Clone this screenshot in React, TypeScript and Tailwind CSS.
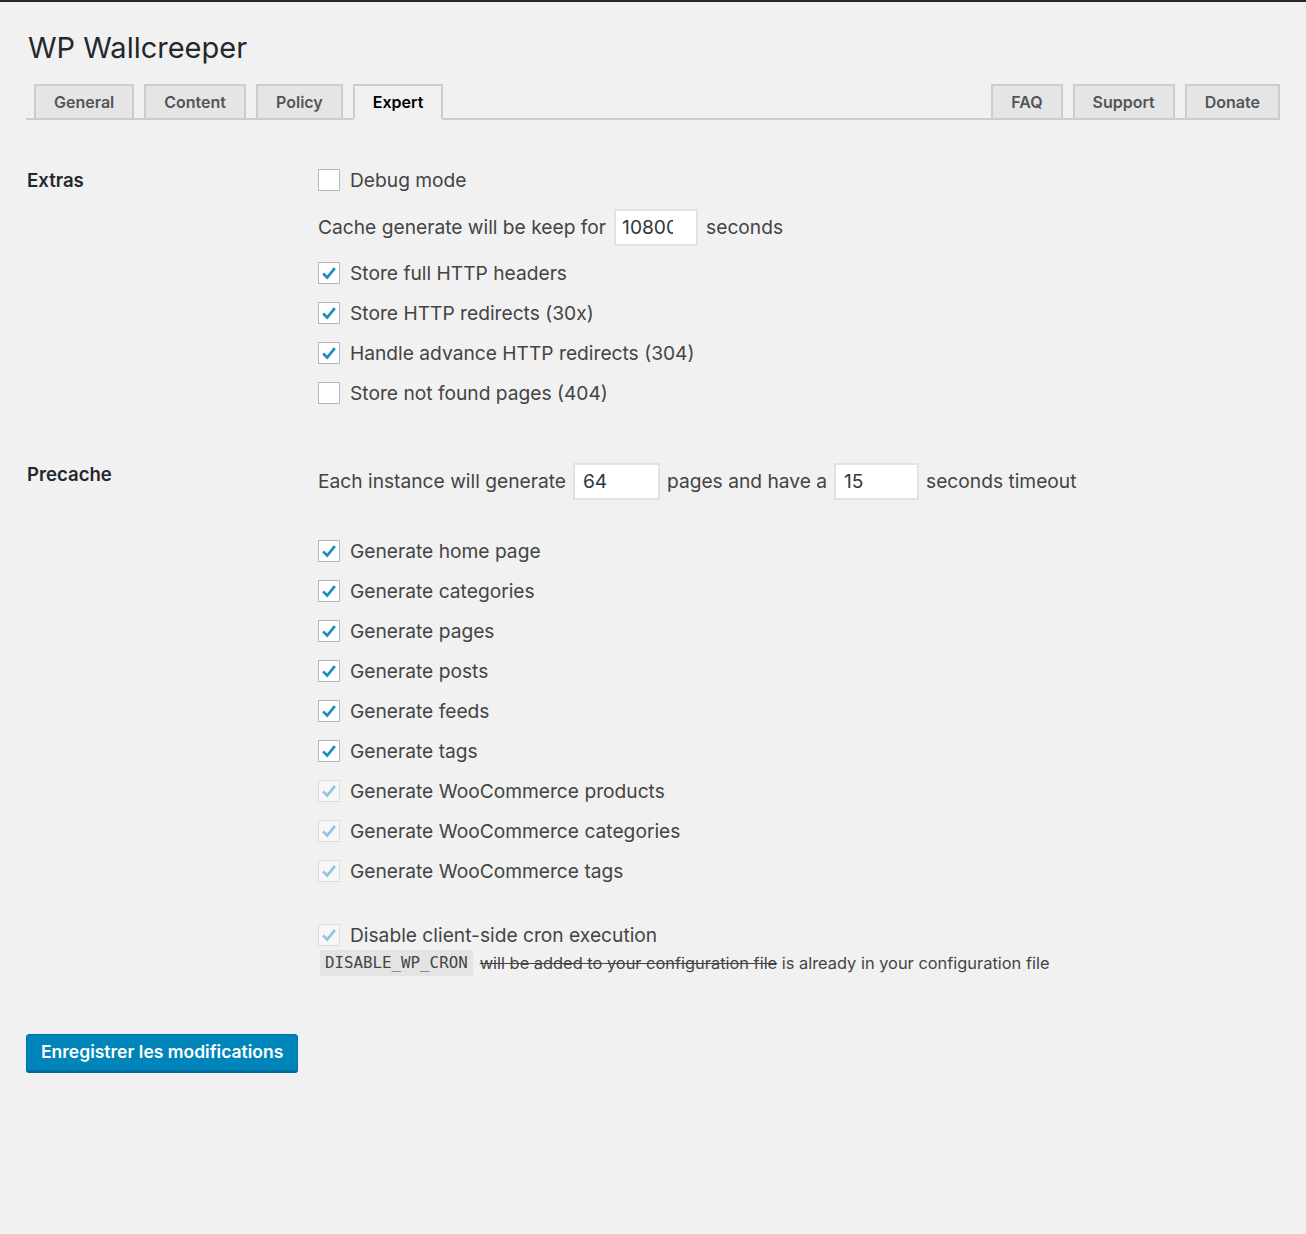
import React from "react";

const font = { fontFamily: "Inter, 'Noto Sans', sans-serif" };

function Check({ checked, disabled }: { checked?: boolean; disabled?: boolean }) {
  return (
    <span
      className={
        "flex h-[22px] w-[22px] shrink-0 items-center justify-center border " +
        (disabled ? "border-[#dcdcdc] bg-[#f7f7f7]" : "border-[#b4b9be] bg-white")
      }
    >
      {checked && (
        <svg width="18" height="18" viewBox="0 0 20 20">
          <path
            d="M3.5 10.5 L8 15 L16.5 4.5"
            fill="none"
            stroke={disabled ? "#8fc6dd" : "#1e8cbe"}
            strokeWidth="3"
          />
        </svg>
      )}
    </span>
  );
}

function CheckRow({ label, checked, disabled }: { label: string; checked?: boolean; disabled?: boolean }) {
  return (
    <div className="flex h-[40px] items-center gap-[10px]">
      <Check checked={checked} disabled={disabled} />
      <span>{label}</span>
    </div>
  );
}

function Input({ value, w, inner }: { value: string; w: string; inner?: string }) {
  return (
    <span
      className={
        "flex h-[37px] items-center whitespace-nowrap border-2 border-[#e2e2e2] bg-white px-[6px] text-[#32373c] " +
        w
      }
    >
      <span className={"block overflow-hidden " + (inner || "")}>{value}</span>
    </span>
  );
}

function Tab({ label, active }: { label: string; active?: boolean }) {
  return (
    <div
      className={
        "flex h-[36px] items-center border-2 px-[18px] text-[16px] font-semibold " +
        (active
          ? "border-[#ccc] border-b-[#f1f1f1] bg-[#f1f1f1] text-black"
          : "border-[#ccc] bg-[#e5e5e5] text-[#555]")
      }
    >
      {label}
    </div>
  );
}

export default function App() {
  return (
    <div className="min-h-[1234px] bg-[#f1f1f1] text-[#444]" style={font}>
      <div className="h-[2px] bg-[#23282d]" />
      <div className="pl-[26px] pr-[26px]">
        <h1 className="pl-[2px] pt-[28px] text-[29px] font-normal leading-[36px] text-[#23282d]">WP Wallcreeper</h1>
        <div className="mt-[18px] flex items-end border-b-2 border-[#ccc] pl-[8px] pr-[0px]">
          <div className="-mb-[2px] flex gap-[10px]">
            <Tab label="General" />
            <Tab label="Content" />
            <Tab label="Policy" />
            <Tab label="Expert" active />
          </div>
          <div className="flex-1" />
          <div className="-mb-[2px] flex gap-[10px]">
            <Tab label="FAQ" />
            <Tab label="Support" />
            <Tab label="Donate" />
          </div>
        </div>

        <div className="text-[19.2px]">
          <div className="mt-[40px] flex">
            <div className="w-[292px] pl-[1px] pt-[9px] text-[18.6px] font-semibold leading-[22px] text-[#23282d]">Extras</div>
            <div className="flex flex-col">
              <CheckRow label="Debug mode" />
              <div className="mb-[6px] mt-[7px] flex h-[40px] items-center gap-[8px]">
                <span>Cache generate will be keep for</span>
                <Input value="10800" w="w-[84px]" inner="w-[51px]" />
                <span>seconds</span>
              </div>
              <CheckRow label="Store full HTTP headers" checked />
              <CheckRow label="Store HTTP redirects (30x)" checked />
              <CheckRow label="Handle advance HTTP redirects (304)" checked />
              <CheckRow label="Store not found pages (404)" />
            </div>
          </div>

          <div className="mt-[49px] flex">
            <div className="w-[292px] pl-[1px] pt-[1px] text-[18.6px] font-semibold leading-[22px] text-[#23282d]">Precache</div>
            <div className="flex flex-col">
              <div className="flex h-[38px] items-center gap-[7px]">
                <span>Each instance will generate</span>
                <Input value="64" w="w-[87px]" inner="pl-[2px]" />
                <span>pages and have a</span>
                <Input value="15" w="w-[85px]" inner="pl-[2px]" />
                <span>seconds timeout</span>
              </div>
              <div className="h-[31px]" />
              <CheckRow label="Generate home page" checked />
              <CheckRow label="Generate categories" checked />
              <CheckRow label="Generate pages" checked />
              <CheckRow label="Generate posts" checked />
              <CheckRow label="Generate feeds" checked />
              <CheckRow label="Generate tags" checked />
              <CheckRow label="Generate WooCommerce products" checked disabled />
              <CheckRow label="Generate WooCommerce categories" checked disabled />
              <CheckRow label="Generate WooCommerce tags" checked disabled />
              <div className="h-[24px]" />
              <CheckRow label="Disable client-side cron execution" checked disabled />
              <div className="-mt-[5px] flex items-center gap-[7px] pl-[2px] text-[16.4px]">
                <code
                  className="bg-[#e4e4e4] px-[5px] py-[1px] text-[15.8px] text-[#444]"
                  style={{ fontFamily: "'DejaVu Sans Mono', monospace" }}
                >
                  DISABLE_WP_CRON
                </code>
                <span>
                  <span className="line-through">will be added to your configuration file</span> is already in your configuration file
                </span>
              </div>
            </div>
          </div>
        </div>

        <div className="mt-[58px]">
          <button className="h-[37px] rounded-[3px] border border-[#0073aa] bg-[#0085ba] px-[14px] text-[17.5px] font-semibold text-white shadow-[0_2px_0_#006799]">
            Enregistrer les modifications
          </button>
        </div>
      </div>
    </div>
  );
}
